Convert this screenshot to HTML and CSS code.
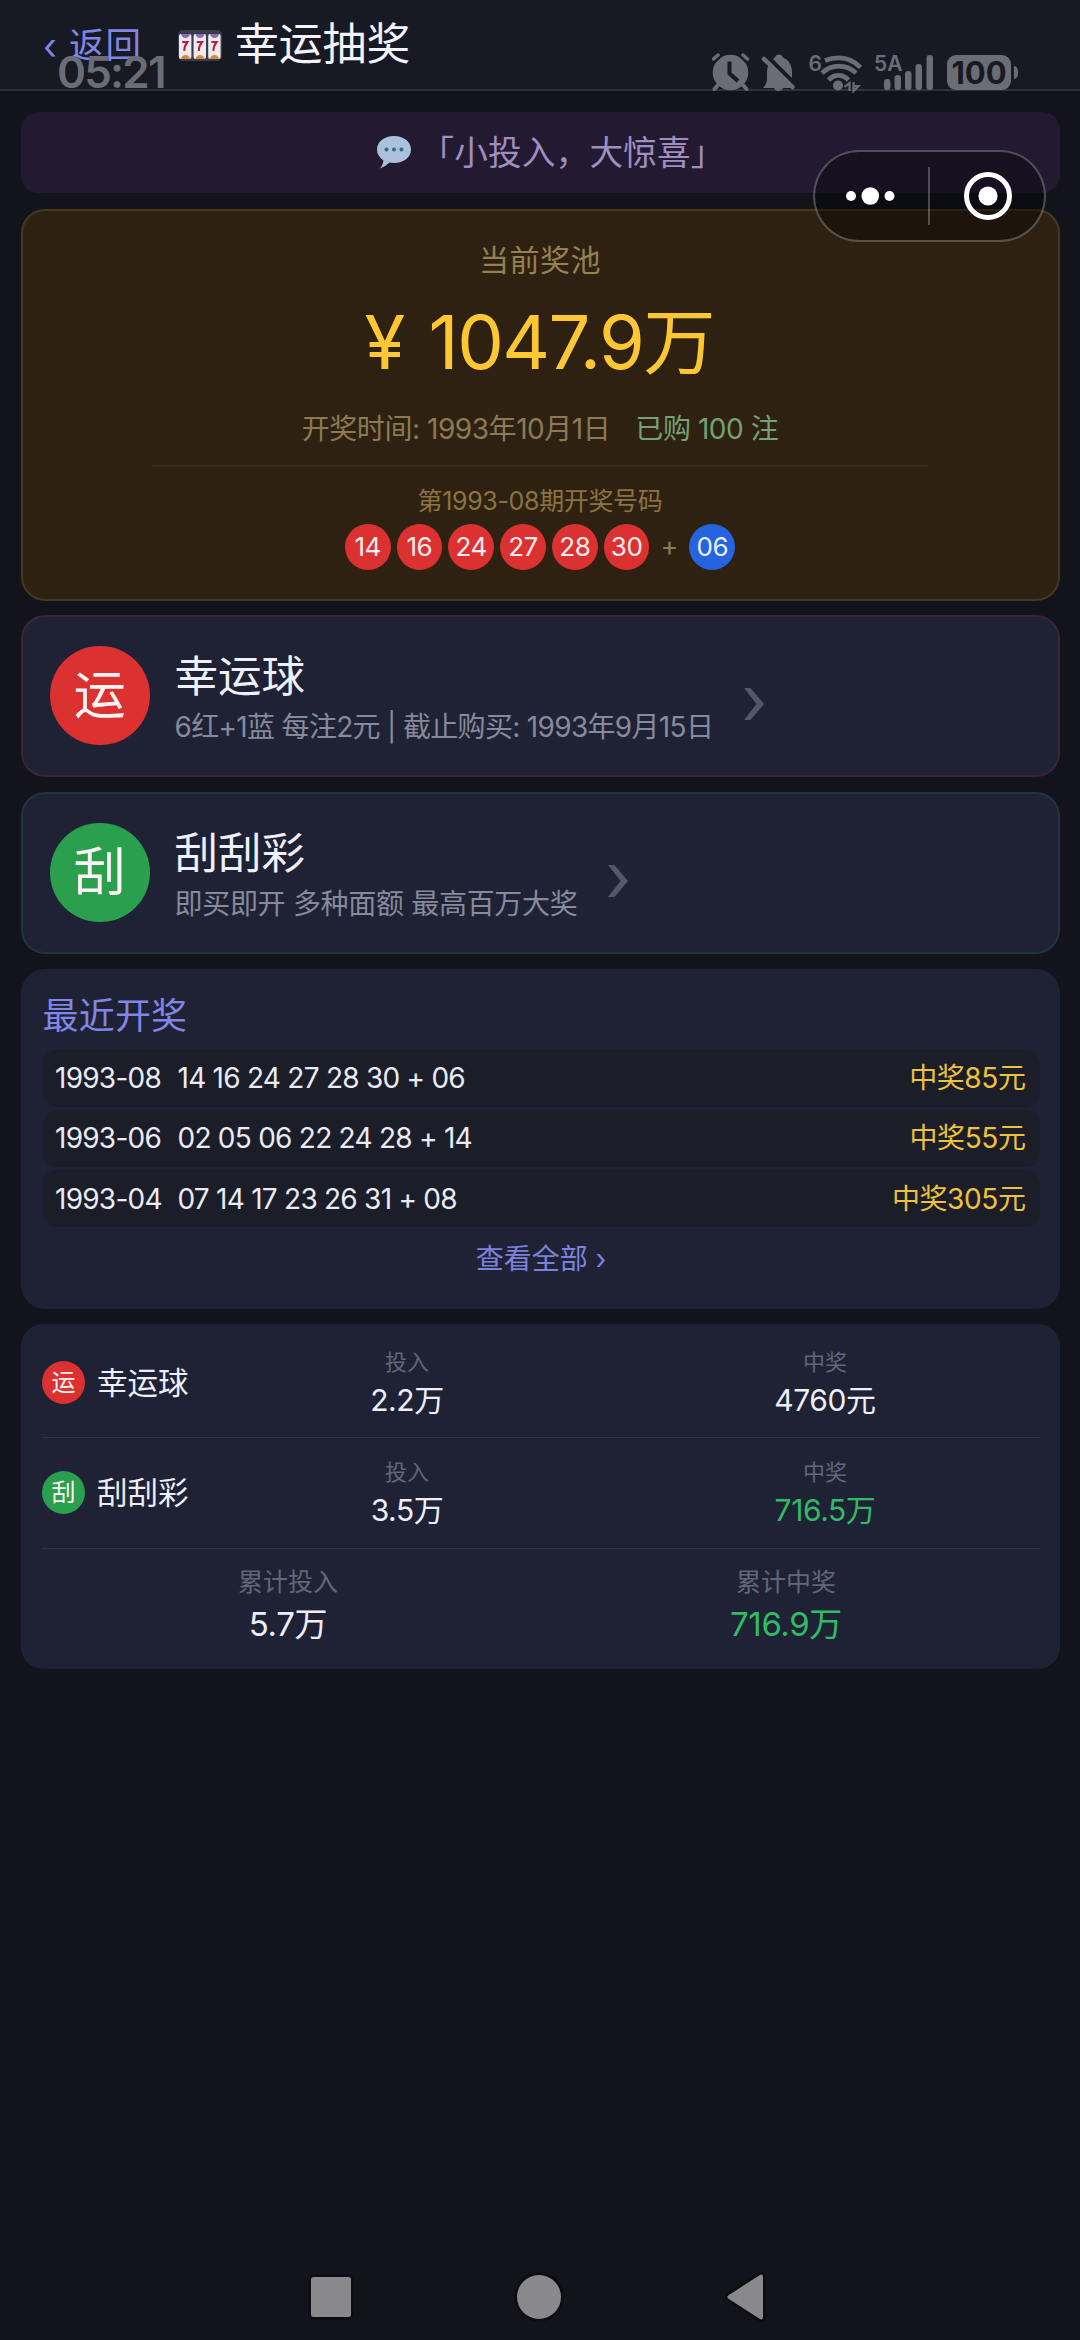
FILE: index.html
```html
<!DOCTYPE html>
<html lang="zh-CN">
<head>
<meta charset="utf-8">
<title>幸运抽奖</title>
<link rel="stylesheet" href="styles.css">
</head>
<body>
<div class="screen">
  <header class="topbar">
    <a class="back"><span class="back-arrow">‹</span><span class="back-text">返回</span></a>
    <svg class="slot" viewBox="0 0 44 32" width="44" height="32">
      <rect x="0" y="0" width="44" height="31" rx="5" fill="#3a3d49"/>
      <g fill="#eeeaf0"><rect x="1" y="4" width="12.4" height="25" rx="2"/><rect x="15.6" y="4" width="12.4" height="25" rx="2"/><rect x="30.2" y="4" width="12.4" height="25" rx="2"/></g>
      <g fill="#8f68b8"><path d="M3 4h9q-1 4-4.500 4t-4.500-4zM17.500 4h9q-1 4-4.500 4t-4.500-4zM32 4h9q-1 4-4.500 4t-4.500-4z"/></g>
      <g fill="#d98a35"><path d="M3 29q1-4 4.500-4t4.500 4zM17.500 29q1-4 4.500-4t4.500 4zM32 29q1-4 4.500-4t4.500 4z"/></g>
      <g fill="none" stroke="#b81f3f" stroke-width="2"><path d="M4.200 12h5.200q-3 3.600-3.200 9M18.800 12h5.200q-3 3.600-3.200 9M33.400 12h5.200q-3 3.600-3.200 9"/></g>
    </svg>
    <h1 class="title">幸运抽奖</h1>
  </header>

  <main class="content">
    <section class="quote">
      <svg class="bubble" viewBox="0 0 34 33" width="34" height="33">
        <path d="M17 0C26.500 0 34 5.600 34 13.500S26.500 27 17 27q-2.500 0-4.500-.4Q8 31 3 32.500q3.500-4 3.300-8.200Q0 20 0 13.500C0 5.600 7.500 0 17 0z" fill="#a9c2da"/>
        <g fill="#34688f"><circle cx="9.500" cy="13.500" r="2"/><circle cx="17" cy="13.500" r="2"/><circle cx="24.500" cy="13.500" r="2"/></g>
      </svg>
      <span class="quote-text">「小投入，大惊喜」</span>
    </section>

    <section class="jackpot">
      <div class="pool-label">当前奖池</div>
      <div class="pool-amount"><span class="yen">¥</span><span class="pool-digits">1047.9</span><span>万</span></div>
      <div class="pool-meta"><span>开奖时间: 1993年10月1日</span><span class="bought">已购 100 注</span></div>
      <div class="last-draw">
        <div class="last-label">第1993-08期开奖号码</div>
        <div class="balls">
          <span class="ball">14</span><span class="ball">16</span><span class="ball">24</span><span class="ball">27</span><span class="ball">28</span><span class="ball">30</span>
          <span class="plus">+</span>
          <span class="ball blue">06</span>
        </div>
      </div>
    </section>

    <section class="game red">
      <div class="game-icon">运</div>
      <div class="game-info">
        <div class="game-name">幸运球</div>
        <div class="game-desc mixed">6红+1蓝 每注2元 | 截止购买: 1993年9月15日</div>
      </div>
      <svg class="chevron" viewBox="0 0 20 32" width="20" height="32"><path d="M0 0h6.500L20 16 6.500 32H0L12.500 16z" fill="#535869"/></svg>
    </section>

    <section class="game green">
      <div class="game-icon">刮</div>
      <div class="game-info">
        <div class="game-name">刮刮彩</div>
        <div class="game-desc">即买即开 多种面额 最高百万大奖</div>
      </div>
      <svg class="chevron" viewBox="0 0 20 32" width="20" height="32"><path d="M0 0h6.500L20 16 6.500 32H0L12.500 16z" fill="#535869"/></svg>
    </section>

    <section class="recent">
      <h2 class="recent-title">最近开奖</h2>
      <div class="draws">
        <div class="draw"><span class="issue">1993-08</span><span class="numbers">14 16 24 27 28 30 + 06</span><span class="prize">中奖85元</span></div>
        <div class="draw"><span class="issue">1993-06</span><span class="numbers">02 05 06 22 24 28 + 14</span><span class="prize">中奖55元</span></div>
        <div class="draw"><span class="issue">1993-04</span><span class="numbers">07 14 17 23 26 31 + 08</span><span class="prize">中奖305元</span></div>
      </div>
      <a class="more">查看全部 ›</a>
    </section>

    <section class="stats">
      <div class="stat-row">
        <div class="stat-name"><span class="mini">运</span>幸运球</div>
        <div class="stat"><span class="k">投入</span><span class="v">2.2万</span></div>
        <div class="stat"><span class="k">中奖</span><span class="v">4760元</span></div>
      </div>
      <div class="stat-row">
        <div class="stat-name"><span class="mini mini-green">刮</span>刮刮彩</div>
        <div class="stat"><span class="k">投入</span><span class="v">3.5万</span></div>
        <div class="stat"><span class="k">中奖</span><span class="v win">716.5万</span></div>
      </div>
      <div class="totals">
        <div class="stat"><span class="k">累计投入</span><span class="v">5.7万</span></div>
        <div class="stat"><span class="k">累计中奖</span><span class="v win">716.9万</span></div>
      </div>
    </section>
  </main>

  <nav class="navbar">
    <svg viewBox="0 0 52 56" width="52" height="56"><rect x="6" y="8" width="40" height="40" rx="2.500"/></svg>
    <svg viewBox="0 0 56 56" width="56" height="56"><circle cx="28" cy="28" r="22"/></svg>
    <svg viewBox="0 0 48 56" width="48" height="56"><path d="M7.500 26.200L38.500 6.300q3.500-2 3.500 1.500v40.400q0 3.500-3.500 1.500L7.500 29.800q-2.500-1.800 0-3.600z"/></svg>
  </nav>

  <div class="clock">05:21</div>
  <svg class="status" viewBox="712 50 310 44" width="310" height="44">
    <g fill="#6a6d76" stroke="none">
      <circle cx="730.500" cy="72.500" r="17.800"/>
      <path d="M718 85l-3.500 4M743 85l3.500 4" stroke="#6a6d76" stroke-width="4" stroke-linecap="round"/>
      <path d="M712.500 60.500l6.500-6.500M748.500 60.500l-6.500-6.500" stroke="#171923" stroke-width="8"/>
      <path d="M713.500 59l4.500-4M747.500 59l-4.500-4" stroke="#6a6d76" stroke-width="3.500" stroke-linecap="round"/>
      <path d="M729.500 61.500v12l8.500 7.500" fill="none" stroke="#171923" stroke-width="4"/>
      <path d="M763 88c3-3 4-6 4-10.500V73c0-8 3-13.500 8-15.500 1-4 7-4 8 0 5 2 9 7 9 14v7c0 4 .5 6.500 2 9.500z"/>
      <path d="M774 88h9q-1 3-4.500 3t-4.500-3z"/>
      <path d="M766 55l32 32" stroke="#171923" stroke-width="4"/>
      <path d="M764 59l28.500 28" stroke="#6a6d76" stroke-width="4.500" stroke-linecap="round"/>
      <text x="808.500" y="71" class="tag">6</text>
      <g fill="none" stroke="#6a6d76" stroke-width="4.800">
        <path d="M825 60.500q6.500-2.600 14-2.600 12 0 21.500 9.500M822 73q7.500-6.800 17-6.800t17 6.800M828.500 80q4.500-4.700 10-4.700t10 4.700"/>
      </g>
      <circle cx="838" cy="85.500" r="5"/>
      <path d="M844.500 87l5-4v8M853.500 82v9l5-5h-4" fill="none" stroke="#6a6d76" stroke-width="2.200"/>
      <text x="874" y="71" class="tag">5A</text>
      <rect x="884" y="79" width="6.500" height="11" rx="3"/><rect x="894.500" y="75" width="6.500" height="15" rx="3"/><rect x="905" y="71" width="6.500" height="19" rx="3"/><rect x="915.500" y="64" width="6.500" height="26" rx="3"/><rect x="926.500" y="55" width="6.500" height="35" rx="3"/>
      <rect x="947" y="55" width="64" height="35" rx="9"/>
      <path d="M1014 66q4 0 4 6.500t-4 6.500z"/>
      <text x="979" y="84" class="level" text-anchor="middle">100</text>
    </g>
  </svg>

  <div class="capsule">
    <svg viewBox="0 0 50 20" width="50" height="20"><g fill="#fff"><circle cx="6" cy="10" r="5"/><circle cx="25.300" cy="10" r="8.800"/><circle cx="44.500" cy="10" r="5"/></g></svg>
    <span class="capsule-line"></span>
    <svg viewBox="0 0 50 50" width="50" height="50"><circle cx="25" cy="25" r="21.500" fill="none" stroke="#fff" stroke-width="5"/><circle cx="25" cy="25" r="9.600" fill="#fff"/></svg>
  </div>
</div>
</body>
</html>
```
FILE: styles.css
```css
* { box-sizing: border-box; margin: 0; padding: 0; }

body {
  width: 1080px;
  height: 2340px;
  overflow: hidden;
  background: #12131b;
  color: #edeef8;
  font-family: Inter, "Noto Sans CJK SC", sans-serif;
  font-weight: 400;
}

.screen {
  position: relative;
  width: 1080px;
  height: 2340px;
  display: flex;
  flex-direction: column;
  white-space: nowrap;
}

.topbar {
  height: 91px;
  flex: none;
  display: flex;
  align-items: center;
  padding-left: 43px;
  background: #171923;
  border-bottom: 2px solid #2f313b;
}

.back { display: flex; width: 135px; color: #8186e4; line-height: 60px; }
.back-arrow { width: 26px; font-size: 36px; padding-top: 3px; }
.back-text { font-size: 35.500px; letter-spacing: 1px; padding-top: 3px; }
.slot { margin-top: 3px; margin-right: 13px; }
.title { font-size: 43.800px; font-weight: 400; line-height: 60px; padding-top: 1px; color: #f3f3fc; }

.content { display: flex; flex-direction: column; padding: 21px 20.500px 0; }

.quote {
  height: 81px;
  margin-bottom: 16px;
  padding-left: 22px;
  display: flex;
  align-items: center;
  justify-content: center;
  border-radius: 18px;
  background: #231a32;
}
.bubble { margin-right: 9px; }
.quote-text { font-size: 33.600px; line-height: 48px; letter-spacing: .2px; color: #9f8fc0; }

.jackpot {
  height: 392px;
  margin-bottom: 14px;
  padding-top: 27px;
  display: flex;
  flex-direction: column;
  align-items: center;
  border: 2px solid #463820;
  border-radius: 24px;
  background: #2e2112;
}
.pool-label { font-size: 30px; letter-spacing: .5px; line-height: 44px; color: #958050; }
.pool-amount { display: flex; margin-top: 16px; font-size: 72px; line-height: 88px; color: #fcc733; }
.yen { width: 64px; font-size: 74px; }
.pool-digits { font-size: 74px; letter-spacing: -1.500px; }
.pool-meta { display: flex; gap: 25px; margin-top: 23px; font-size: 28px; letter-spacing: -.45px; line-height: 40px; color: #8c7a55; }
.bought { color: #73a273; }
.last-draw {
  width: 776px;
  margin-top: 16px;
  padding-top: 16px;
  display: flex;
  flex-direction: column;
  align-items: center;
  border-top: 2px solid #3c2b1a;
}
.last-label { font-size: 25px; letter-spacing: -.35px; line-height: 36px; color: #8b7341; }
.balls { display: flex; gap: 6px; align-items: center; margin-top: 5px; }
.ball {
  width: 45.800px;
  height: 46px;
  border-radius: 50%;
  background: #dc3131;
  color: #fdeeee;
  font-size: 26px;
  line-height: 46px;
  letter-spacing: -.5px;
  text-align: center;
}
.blue { background: #2663df; color: #e8effc; }
.plus { width: 28px; line-height: 44px; text-align: center; font-size: 27px; color: #8a7a58; }

.game {
  height: 161.500px;
  margin-bottom: 15.500px;
  display: flex;
  padding: 28.500px 0 0 27.500px;
  border: 2px solid;
  border-radius: 24px;
  background: #1e2234;
}
.red { border-color: #3a2436; }
.green { border-color: #21353d; }
.game-icon {
  width: 99.500px;
  height: 99.500px;
  border-radius: 50%;
  background: #dc3131;
  color: #fdf3f3;
  font-size: 52px;
  line-height: 99px;
  text-align: center;
}
.green .game-icon { background: #2a9f4e; }
.game-info { margin-left: 25px; }
.game-name { font-size: 43.500px; line-height: 60px; color: #f0f0fa; }
.game-desc { margin-top: 1px; font-size: 28px; letter-spacing: -.3px; line-height: 40px; color: #868a9c; }
.mixed { letter-spacing: -.68px; }
.chevron { margin: 42px 0 0 31px; }

.recent {
  height: 339.500px;
  margin-bottom: 15.500px;
  padding: 21px 20px 0 22px;
  border-radius: 24px;
  background: #1e2234;
  display: flex;
  flex-direction: column;
}
.recent-title { font-size: 36px; letter-spacing: .2px; font-weight: 400; line-height: 52px; color: #8186e6; }
.draws { display: flex; flex-direction: column; gap: 3.700px; margin-top: 8px; }
.draw {
  height: 56.500px;
  display: flex;
  align-items: center;
  padding: 0 14px 0 12.500px;
  border-radius: 14px;
  background: #1b1e29;
  font-size: 28px;
  line-height: 56px;
  letter-spacing: -.75px;
  color: #eaebf4;
}
.issue { width: 122.500px; }
.prize { margin-left: auto; letter-spacing: -.4px; color: #efc13c; }
.more { margin-top: 12px; text-align: center; font-size: 28px; line-height: 40px; color: #7c81dc; }

.stats {
  height: 345px;
  padding: 0 20px 0 21.500px;
  border-radius: 22px;
  background: #1e2234;
}
.stat-row {
  display: grid;
  grid-template-columns: 156px 418px 418px;
  height: 110.500px;
  border-bottom: 1.500px solid #2f3345;
}
.stat-row:first-child { height: 114px; padding-top: 4px; }
.stat-name { display: flex; align-items: center; font-size: 30.500px; line-height: 44px; }
.mini {
  width: 43px;
  height: 43px;
  margin-right: 12px;
  border-radius: 50%;
  background: #dc3131;
  color: #fdf3f3;
  font-size: 24px;
  line-height: 43px;
  text-align: center;
}
.mini-green { background: #2a9f4e; }
.stat { display: flex; flex-direction: column; align-items: center; padding-top: 18.500px; }
.k { font-size: 22px; line-height: 30px; color: #62667a; }
.v { font-size: 30px; line-height: 40px; margin-top: 3px; letter-spacing: -.4px; }
.win { color: #31bb66; }
.totals { display: grid; grid-template-columns: 492px 504px; }
.totals .k { font-size: 25px; }
.totals .v { font-size: 33px; margin-top: 7px; }

.navbar {
  margin-top: auto;
  height: 86px;
  flex: none;
  display: flex;
  justify-content: space-between;
  padding: 15px 311px 0 305px;
}
.navbar svg { fill: #89888d; stroke: #0c0c13; stroke-width: 5px; paint-order: stroke; overflow: visible; }

.clock {
  position: absolute;
  left: 57px;
  top: 44px;
  font-size: 44px;
  font-weight: 600;
  letter-spacing: -1.800px;
  line-height: 56px;
  color: #6a6d76;
}
.status { position: absolute; left: 712px; top: 50px; }
.tag { font-size: 21px; font-weight: 600; }
.level { font-size: 31px; font-weight: 700; fill: #171923; }

.capsule {
  position: absolute;
  left: 813px;
  top: 150px;
  width: 233px;
  height: 92px;
  border: 2.500px solid rgba(255, 255, 255, .26);
  border-radius: 46px;
  background: rgba(0, 0, 0, .36);
  display: flex;
  align-items: center;
  padding: 0 30px 0 30px;
}
.capsule-line { width: 2px; height: 58px; margin: 0 33px 0 33px; background: rgba(255, 255, 255, .26); }
.capsule svg { flex: none; }
```
